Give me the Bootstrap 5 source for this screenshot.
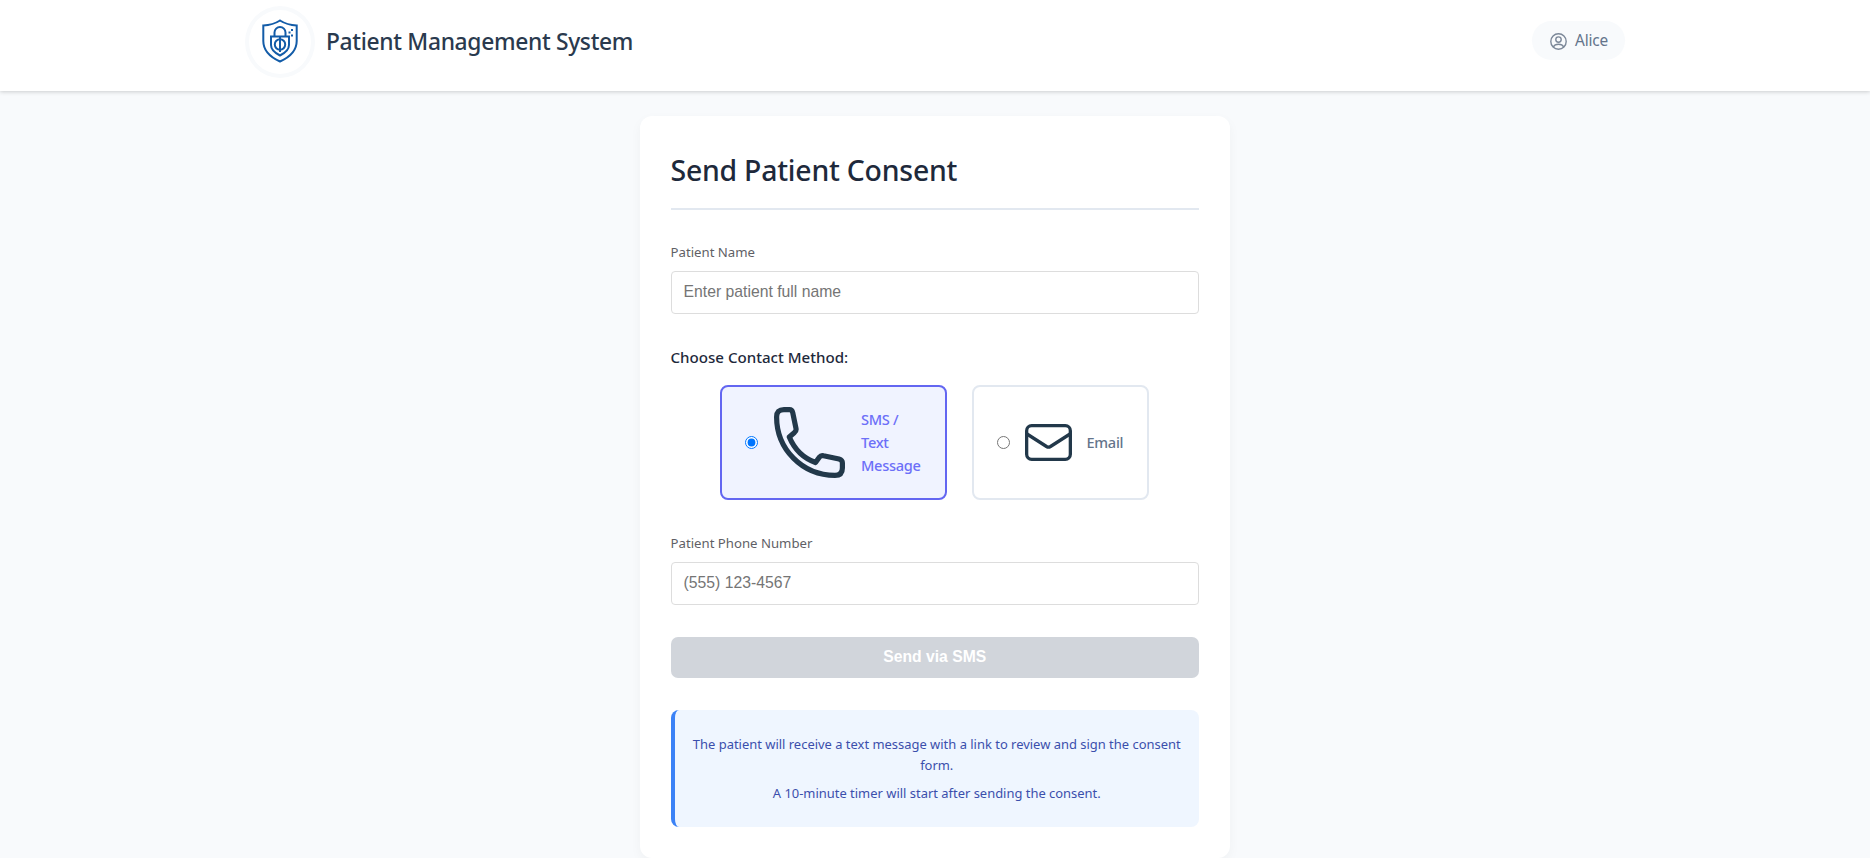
<!DOCTYPE html>
<html lang="en">
<head>
<meta charset="utf-8">
<meta name="viewport" content="width=device-width, initial-scale=1">
<title>Patient Management System</title>
<link href="https://cdn.jsdelivr.net/npm/bootstrap@5.3.0/dist/css/bootstrap.min.css" rel="stylesheet">
<style>
body{background:#f8fafc;font-family:"Noto Sans","Open Sans",sans-serif;color:#1e293b;overflow:hidden}
.topbar{height:91px;background:#fff;box-shadow:0 1px 4px rgba(0,0,0,.18)}
.topbar-inner{width:1380px;margin:0 auto}
.brand-row{height:84px}
.logo{width:70px;height:72px;border:4px solid #f8fafc}
.logo svg{margin-top:8.5px}
.brand{font-size:22.8px;font-weight:500;color:#2a3a4e;line-height:32px;letter-spacing:-.32px;white-space:nowrap;margin:0 0 0 11px}
.user-pill{width:93px;height:39px;margin-top:21px;background:#f8fafc;color:#64748b;font-size:15.4px;letter-spacing:-.2px;padding:1px 0 0 1px}
.consent{width:590px;height:742px;margin:25px auto 0;padding:31px 31px 31px 30.5px;border:0;border-radius:12px;box-shadow:0 4px 12px rgba(0,0,0,.04)}
.consent h1{font-size:28.4px;font-weight:500;line-height:47px;letter-spacing:-.22px;height:63px;margin:0 0 31px;border-bottom:2px solid #e2e8f0;white-space:nowrap}
.field-label{font-size:13.2px;line-height:23px;color:#5f5f66;margin:0;height:30px;display:block}
.field-label.phone{margin-top:32px}
.entry{height:43px;padding:0 12px 1px;border:1px solid #ddd;border-radius:4px;font:15.75px "Liberation Sans",Arial,sans-serif}
.entry::placeholder{color:#757575}
.method-title{font-size:15.1px;font-weight:500;line-height:22px;margin:32px 0 17px}
.choices{gap:24.5px;margin-right:1px}
.choice{height:115px;width:177px;border:2px solid #e2e8f0;border-radius:8px;font-size:14.6px;font-weight:500;line-height:22.7px;letter-spacing:-.3px;color:#64748b;padding:0 23px}
.choice svg{margin:0 15px}
.choice.selected{width:227px;border-color:#6366f1;background:#f0f3ff;color:#6c6ff8}
.choice.selected svg{margin:0 16px}
.choice input{width:13px;height:13px;margin:0;flex:none}
.send{height:41.5px;margin-top:31.5px;border-radius:7px;font:bold 15.7px "Liberation Sans",Arial,sans-serif}
.send,.send:disabled{background:#d1d5db;color:#fff;border:0;opacity:1}
.info{height:117px;margin-top:31.5px;border-left:4px solid #3b82f6;border-radius:8px;background:#eff6ff;color:#3b4fac;font-size:12.95px;line-height:20.5px;padding-top:24.5px;text-align:center;white-space:nowrap}
.info p{margin:0 0 8px}
</style>
</head>
<body>
<header class="topbar"><div class="topbar-inner d-flex align-items-start justify-content-between">
<div class="brand-row d-flex align-items-center">
<div class="logo rounded-circle d-flex justify-content-center">
<svg width="36" height="44" viewBox="0 0 36 44" fill="none" stroke="#135ca8" stroke-width="2"><path d="M18 1.500Q11 6 1.300 6.500V22C1.300 32 8 38 18 42.500C28 38 34.700 32 34.700 22V6.500Q25 6 18 1.500Z"/><path d="M12.500 17v-3.500a5.500 5.500 0 0 1 11 0V17M9 17.500h18V26c0 5-4 8-9 10.500C13 34 9 31 9 26Z"/><circle cx="18" cy="25.500" r="5.200"/><path d="M18 17v16"/><path d="M29 11h2M26.500 13.500h2M29 16.500h2" stroke-width="1.900"/></svg></div>
<p class="brand">Patient Management System</p></div>
<div class="user-pill rounded-pill d-flex align-items-center justify-content-center"><svg class="me-2" width="17" height="17" viewBox="0 0 17 17" fill="none" stroke="#7b8798" stroke-width="1.400"><circle cx="8.500" cy="8.500" r="7.700"/><circle cx="8.500" cy="6.600" r="2.700"/><path d="M3.300 14c1-2 2.900-2.800 5.200-2.800s4.200.8 5.200 2.800"/></svg><span>Alice</span></div>
</div></header>
<main class="card consent">
<h1>Send Patient Consent</h1>
<label class="field-label" for="name">Patient Name</label>
<input class="form-control entry" id="name" placeholder="Enter patient full name">
<div class="method-title">Choose Contact Method:</div>
<div class="choices d-flex justify-content-center">
<label class="choice selected d-flex align-items-center"><input type="radio" name="method" checked><svg class="flex-shrink-0" width="71" height="71" viewBox="0 0 71 71" fill="none" stroke="#22384a" stroke-width="5.200" stroke-linejoin="round"><path d="M10 2.600H15.500Q18 2.600 18.700 5.500L22 21.500Q22.500 24 20.500 25.500L15.300 30C20.500 42.500 29 51 41.500 55.500L45.500 50Q47 48 49.500 48.700L65 52Q68.400 53 68.400 56V61Q68.400 68.400 61 68.400C28 68.400 2.600 42 2.600 10Q2.600 2.600 10 2.600Z"/></svg><span>SMS / Text Message</span></label>
<label class="choice d-flex align-items-center"><input type="radio" name="method"><svg class="flex-shrink-0" width="47" height="37" viewBox="0 0 47 37" fill="none" stroke="#22384a" stroke-width="3.300"><rect x="1.650" y="1.650" width="43.700" height="33.700" rx="5"/><path d="M2 10L21.500 22.500Q23.500 23.700 25.500 22.500L45 10"/></svg><span>Email</span></label>
</div>
<label class="field-label phone" for="phone">Patient Phone Number</label>
<input class="form-control entry" id="phone" placeholder="(555) 123-4567">
<button class="btn send w-100" disabled>Send via SMS</button>
<div class="info"><p>The patient will receive a text message with a link to review and sign the consent<br>form.</p><p>A 10-minute timer will start after sending the consent.</p></div>
</main>
<script src="https://cdn.jsdelivr.net/npm/bootstrap@5.3.0/dist/js/bootstrap.bundle.min.js"></script>
</body>
</html>
